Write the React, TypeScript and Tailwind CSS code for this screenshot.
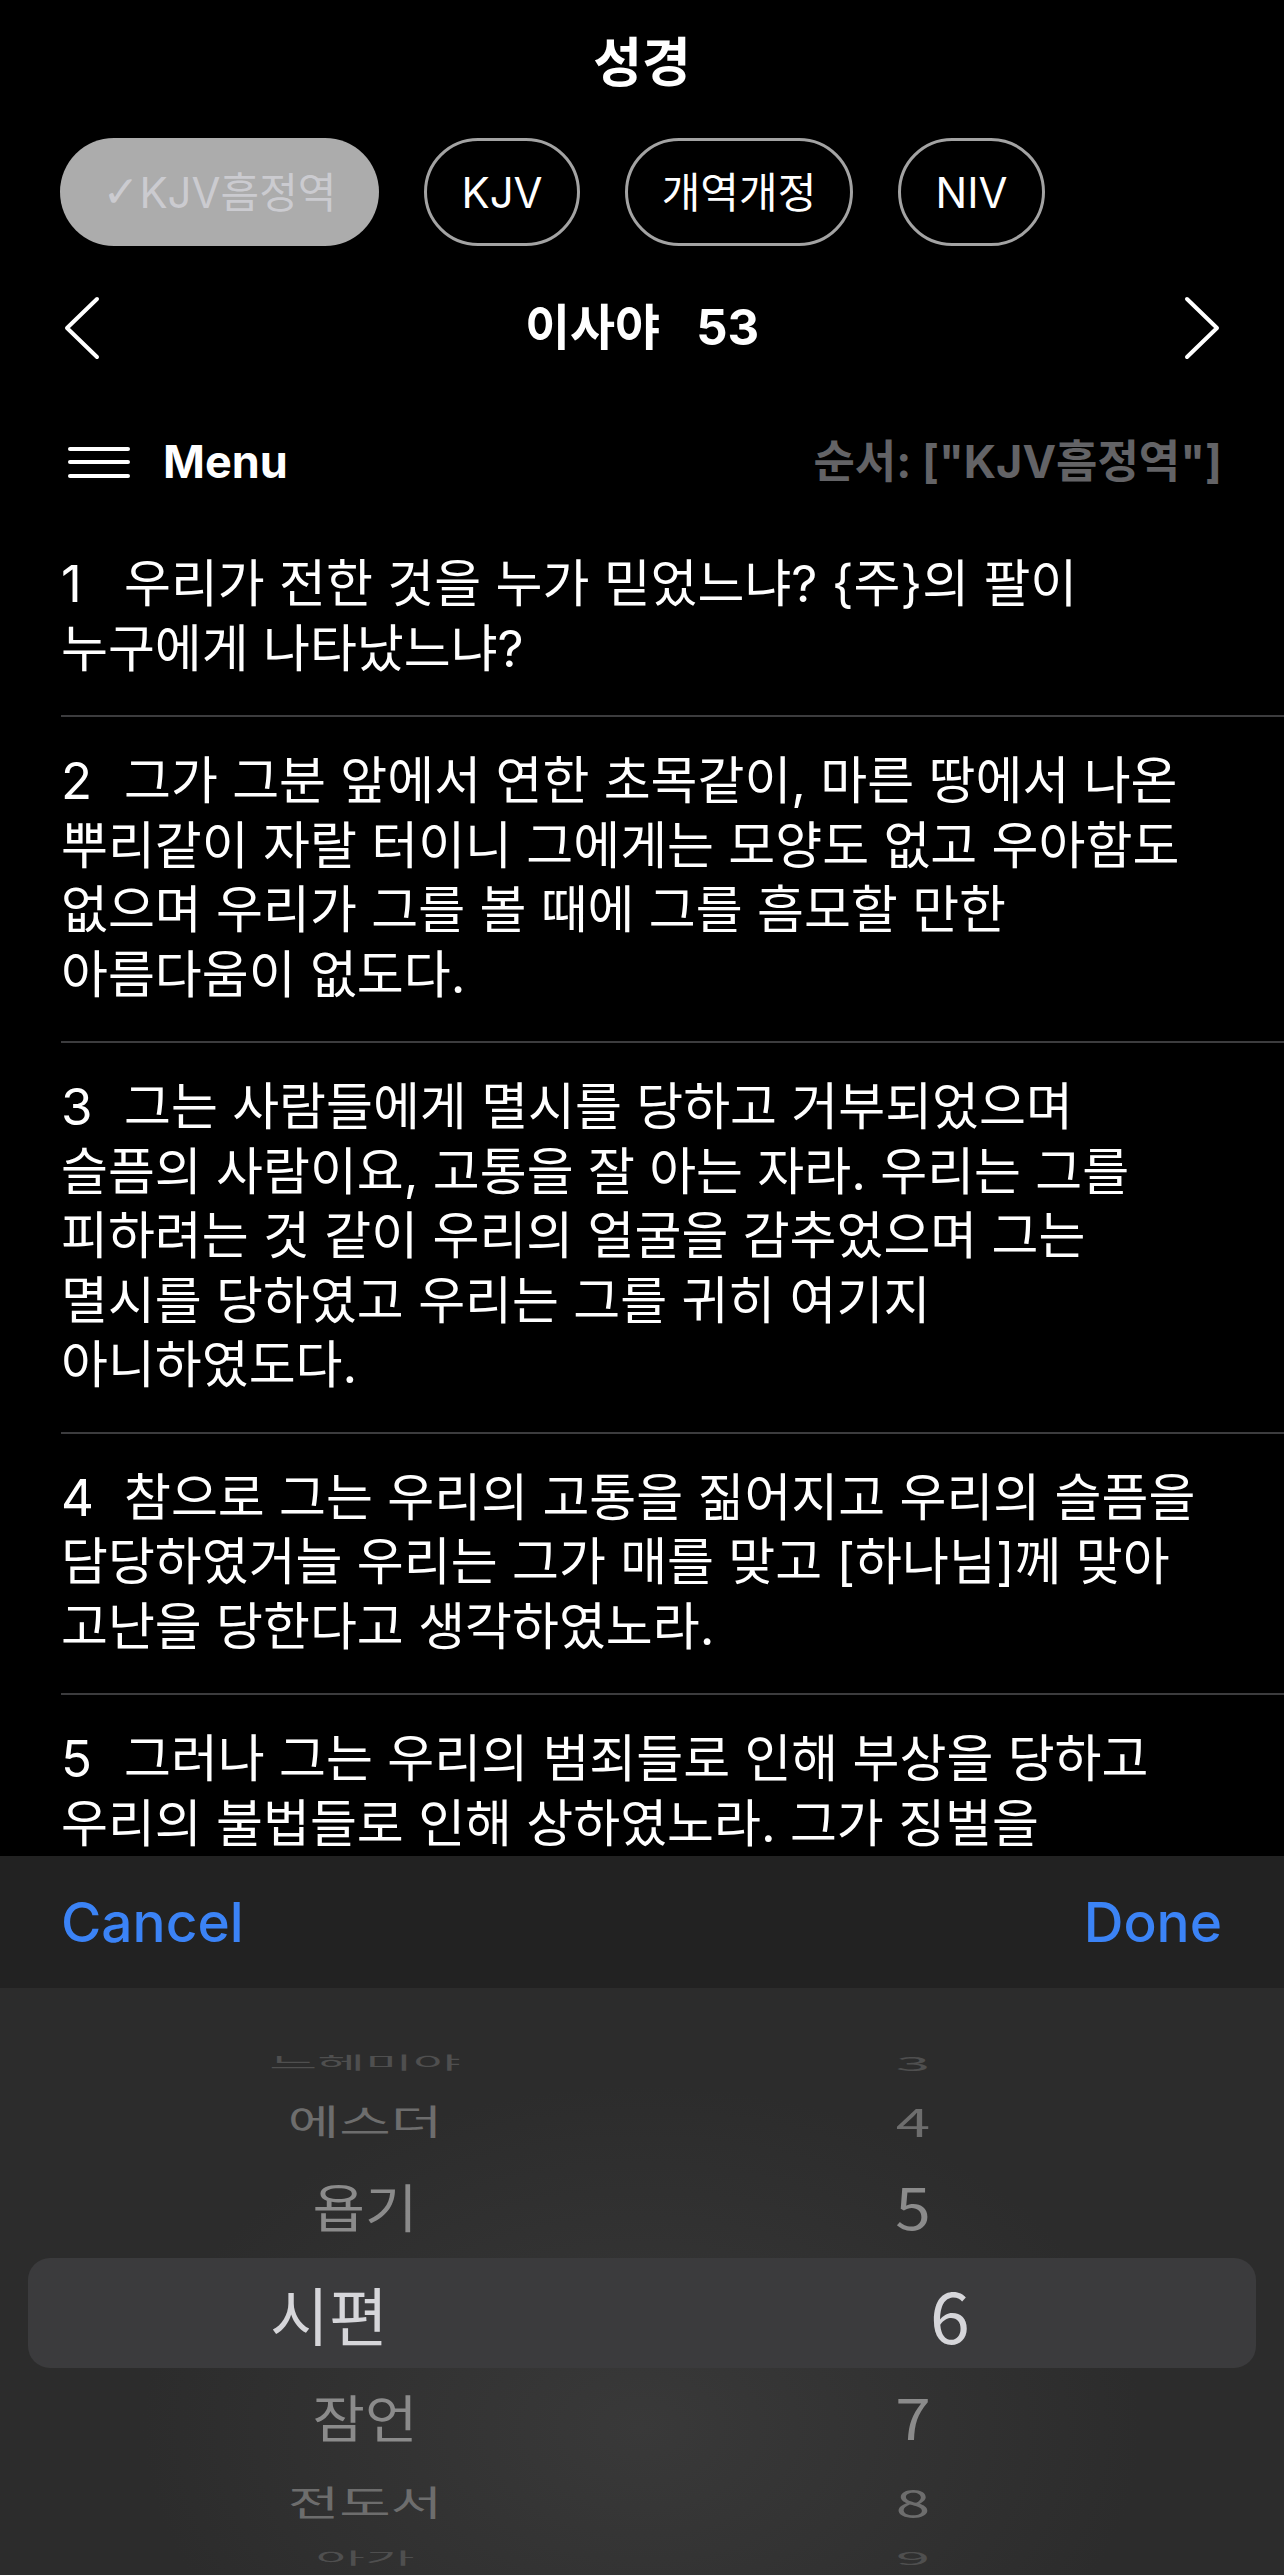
import React from 'react'

const verses: { n: number; lines: string[] }[] = [
  { n: 1, lines: ['우리가 전한 것을 누가 믿었느냐? {주}의 팔이', '누구에게 나타났느냐?'] },
  {
    n: 2,
    lines: [
      '그가 그분 앞에서 연한 초목같이, 마른 땅에서 나온',
      '뿌리같이 자랄 터이니 그에게는 모양도 없고 우아함도',
      '없으며 우리가 그를 볼 때에 그를 흠모할 만한',
      '아름다움이 없도다.',
    ],
  },
  {
    n: 3,
    lines: [
      '그는 사람들에게 멸시를 당하고 거부되었으며',
      '슬픔의 사람이요, 고통을 잘 아는 자라. 우리는 그를',
      '피하려는 것 같이 우리의 얼굴을 감추었으며 그는',
      '멸시를 당하였고 우리는 그를 귀히 여기지',
      '아니하였도다.',
    ],
  },
  {
    n: 4,
    lines: [
      '참으로 그는 우리의 고통을 짊어지고 우리의 슬픔을',
      '담당하였거늘 우리는 그가 매를 맞고 [하나님]께 맞아',
      '고난을 당한다고 생각하였노라.',
    ],
  },
  // the rest of verse 5 sits under the picker sheet
  { n: 5, lines: ['그러나 그는 우리의 범죄들로 인해 부상을 당하고', '우리의 불법들로 인해 상하였노라. 그가 징벌을'] },
]

const Chevron = ({ left }: { left?: boolean }) => (
  <svg width="38" height="64" viewBox="0 0 38 64" fill="none">
    <path
      d={left ? 'M34 3 L4 32 L34 61' : 'M4 3 L34 32 L4 61'}
      stroke="white"
      strokeWidth="4"
      strokeLinecap="round"
      strokeLinejoin="round"
    />
  </svg>
)

const Verse = ({ n, lines }: { n: number; lines: string[] }) => (
  <div className="ml-[61px] border-b-2 border-[#3c3c3e] pb-[34px] pt-[32px] pr-[40px] text-[51px] leading-[64.5px] text-white">
    {lines.map((line, i) => (
      <div key={i} className="whitespace-nowrap">
        {i === 0 && <span className="inline-block w-[63px]">{n}</span>}
        {line}
      </div>
    ))}
  </div>
)

const App = () => {
  return (
    <div className="flex h-[2575px] w-[1284px] flex-col overflow-hidden bg-black font-['Inter','Noto_Sans_CJK_KR',sans-serif]">
      {/* title */}
      <div className="flex h-[138px] shrink-0 items-center justify-center pb-[10px] text-[53px] font-bold text-white">
        성경
      </div>

      {/* translation pills */}
      <div className="flex h-[108px] shrink-0 gap-[45px] pl-[60px]">
        <div className="flex w-[319px] items-center justify-center rounded-full bg-[#acacac] text-[42px] text-[#cbcbd0]">
          <span className="font-['DejaVu_Sans'] text-[44px]">✓</span>KJV흠정역
        </div>
        <div className="flex w-[156px] items-center justify-center rounded-full border-[3px] border-[#a3a3a3] text-[42px] text-white">
          KJV
        </div>
        <div className="flex w-[228px] items-center justify-center rounded-full border-[3px] border-[#a3a3a3] text-[42px] text-white">
          개역개정
        </div>
        <div className="flex w-[147px] items-center justify-center rounded-full border-[3px] border-[#a3a3a3] text-[42px] text-white">
          NIV
        </div>
      </div>

      {/* chapter nav */}
      <div className="flex h-[164px] shrink-0 items-center justify-between px-[63px]">
        <Chevron left />
        <div className="text-[49px] font-bold text-white">
          이사야<span className="ml-[36px]">53</span>
        </div>
        <Chevron />
      </div>

      {/* menu row */}
      <div className="flex h-[104px] shrink-0 items-center justify-between pl-[68px] pr-[62px]">
        <div className="flex items-center gap-[33px]">
          <div className="flex w-[62px] flex-col gap-[9.5px]">
            <div className="h-[4px] rounded-full bg-white" />
            <div className="h-[4px] rounded-full bg-white" />
            <div className="h-[4px] rounded-full bg-white" />
          </div>
          <span className="text-[45px] font-bold text-white">Menu</span>
        </div>
        <span className="text-[45px] font-bold text-[#636366]">순서: ["KJV흠정역"]</span>
      </div>

      {/* verses */}
      <div className="min-h-0 flex-1 overflow-hidden pt-[6px]">
        {verses.map((v) => (
          <Verse key={v.n} n={v.n} lines={v.lines} />
        ))}
      </div>

      {/* picker toolbar */}
      <div className="flex h-[132px] shrink-0 items-center justify-between bg-[#222222] pl-[61px] pr-[62px] text-[55px] font-medium text-[#3b83f6]">
        <span>Cancel</span>
        <span>Done</span>
      </div>

      {/* picker wheel */}
      <div className="flex h-[587px] shrink-0 flex-col bg-[radial-gradient(ellipse_at_50%_75%,#393939_0%,#2c2c2c_55%)] pt-[48px] font-['Noto_Sans_CJK_KR',sans-serif] leading-none">
        <div className="flex h-[52px] items-center text-[#4f4f4f]">
          <div className="ml-[165px] w-[400px] text-center text-[52px]">
            <span className="inline-block scale-y-[0.32]">느헤미야</span>
          </div>
          <div className="ml-[248px] w-[200px] text-center text-[62px]">
            <span className="inline-block scale-y-[0.32]">3</span>
          </div>
        </div>
        <div className="flex h-[64px] items-center text-[#6d6d6d]">
          <div className="ml-[165px] w-[400px] text-center text-[56px]">
            <span className="inline-block scale-y-[0.63]">에스더</span>
          </div>
          <div className="ml-[248px] w-[200px] text-center text-[62px]">
            <span className="inline-block scale-y-[0.63]">4</span>
          </div>
        </div>
        <div className="flex h-[106px] items-center text-[#8b8b8b]">
          <div className="ml-[165px] w-[400px] text-center text-[57px]">
            <span className="inline-block scale-y-[0.91]">욥기</span>
          </div>
          <div className="ml-[248px] w-[200px] text-center text-[64px]">
            <span className="inline-block scale-y-[0.91]">5</span>
          </div>
        </div>
        <div className="mx-[28px] flex h-[110px] items-center rounded-[22px] bg-[#3b3b3d] text-[#d6d6da]">
          <div className="ml-[101px] w-[400px] text-center text-[64px]">시편</div>
          <div className="ml-[321px] w-[200px] text-center text-[72px]">6</div>
        </div>
        <div className="flex h-[94px] items-center text-[#8b8b8b]">
          <div className="ml-[165px] w-[400px] text-center text-[57px]">
            <span className="inline-block scale-y-[0.9]">잠언</span>
          </div>
          <div className="ml-[248px] w-[200px] text-center text-[64px]">
            <span className="inline-block scale-y-[0.9]">7</span>
          </div>
        </div>
        <div className="flex h-[78px] items-center text-[#6d6d6d]">
          <div className="ml-[165px] w-[400px] text-center text-[56px]">
            <span className="inline-block scale-y-[0.63]">전도서</span>
          </div>
          <div className="ml-[248px] w-[200px] text-center text-[62px]">
            <span className="inline-block scale-y-[0.63]">8</span>
          </div>
        </div>
        <div className="flex h-[34px] items-center text-[#4f4f4f]">
          <div className="ml-[165px] w-[400px] text-center text-[54px]">
            <span className="inline-block scale-y-[0.29]">아가</span>
          </div>
          <div className="ml-[248px] w-[200px] text-center text-[62px]">
            <span className="inline-block scale-y-[0.29]">9</span>
          </div>
        </div>
      </div>
    </div>
  )
}

export default App
